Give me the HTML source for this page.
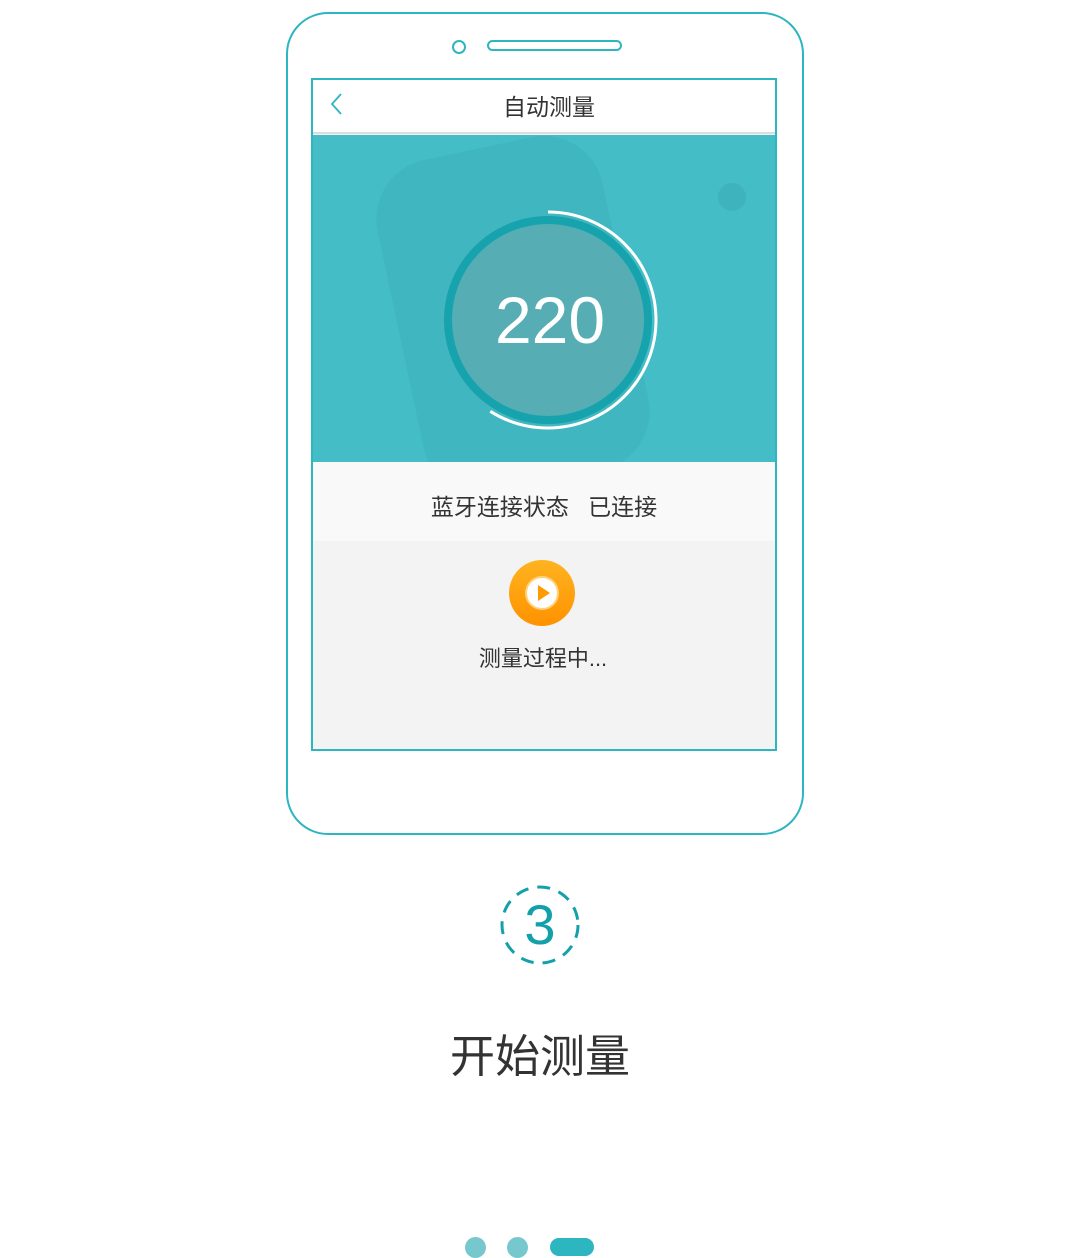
<!DOCTYPE html>
<html><head><meta charset="utf-8"><style>
*{margin:0;padding:0;box-sizing:border-box}
body{width:1080px;height:1258px;background:#fff;position:relative;overflow:hidden;font-family:"Liberation Sans","Noto Sans CJK SC",sans-serif}
.a{position:absolute}
</style></head><body>
<div class="a" style="left:286px;top:12px;width:518px;height:823px;border:2px solid #2db5c0;border-radius:42px"></div>
<div class="a" style="left:452px;top:40px;width:14px;height:14px;border:2px solid #2db5c0;border-radius:50%"></div>
<div class="a" style="left:487px;top:40px;width:135px;height:11px;border:2px solid #2db5c0;border-radius:6px"></div>
<div class="a" style="left:311px;top:78px;width:466px;height:673px;border:2px solid #2db5c0;background:#f3f3f3"></div>
<div class="a" style="left:313px;top:80px;width:462px;height:54px;background:#fff;border-bottom:2px solid #ddd"></div>
<svg class="a" style="left:326px;top:92px" width="20" height="26"><path d="M15 2 L6 12 L15 22" fill="none" stroke="#2db5c0" stroke-width="1.8"/></svg>
<div class="a" style="left:313px;top:88px;width:472px;text-align:center;font-size:23px;color:#333">自动测量</div>
<div class="a" style="left:313px;top:135px;width:462px;height:327px;background:#45bdc6;overflow:hidden">
 <div class="a" style="left:85px;top:10px;width:230px;height:340px;background:#40b6c0;border-radius:60px;transform:rotate(-12deg)"></div>
 <div class="a" style="left:405px;top:48px;width:28px;height:28px;background:#3fb3bd;border-radius:50%"></div>
</div>
<svg class="a" style="left:313px;top:135px" width="462" height="327">
 <circle cx="235" cy="185" r="96" fill="#56aeb4"/>
 <circle cx="235" cy="185" r="100" fill="none" stroke="#17a3ad" stroke-width="8"/>
 <circle cx="235" cy="185" r="108" fill="none" stroke="#fff" stroke-width="3" stroke-dasharray="400 1000" transform="rotate(-90 235 185)"/>
 <text x="237" y="208" text-anchor="middle" font-size="66" fill="#fff" font-family="Liberation Sans,sans-serif">220</text>
</svg>
<div class="a" style="left:313px;top:462px;width:462px;height:79px;background:#f9f9f9"></div>
<div class="a" style="left:313px;top:488px;width:462px;text-align:center;font-size:23px;color:#333;white-space:pre">蓝牙连接状态   已连接</div>
<div class="a" style="left:509px;top:560px;width:66px;height:66px;border-radius:50%;background:linear-gradient(#ffb320,#ff9200)"></div>
<div class="a" style="left:525px;top:576px;width:34px;height:34px;border-radius:50%;background:#fff;border:2px solid #ffd27a"></div>
<svg class="a" style="left:525px;top:576px" width="34" height="34"><path d="M13 9 L25 17 L13 25Z" fill="#ff9a00"/></svg>
<div class="a" style="left:313px;top:641px;width:460px;text-align:center;font-size:22px;color:#333">测量过程中...</div>
<svg class="a" style="left:498px;top:883px" width="84" height="84"><circle cx="42" cy="42" r="38" fill="none" stroke="#14a0aa" stroke-width="3" stroke-dasharray="13 9"/></svg>
<div class="a" style="left:490px;top:894px;width:100px;text-align:center;font-size:56px;line-height:62px;color:#14a0aa">3</div>
<div class="a" style="left:340px;top:1020px;width:400px;text-align:center;font-size:45px;color:#333">开始测量</div>
<div class="a" style="left:465px;top:1237px;width:21px;height:21px;border-radius:50%;background:#76c8ce"></div>
<div class="a" style="left:507px;top:1237px;width:21px;height:21px;border-radius:50%;background:#76c8ce"></div>
<div class="a" style="left:550px;top:1238px;width:44px;height:18px;border-radius:9px;background:#2db5c0"></div>
</body></html>
